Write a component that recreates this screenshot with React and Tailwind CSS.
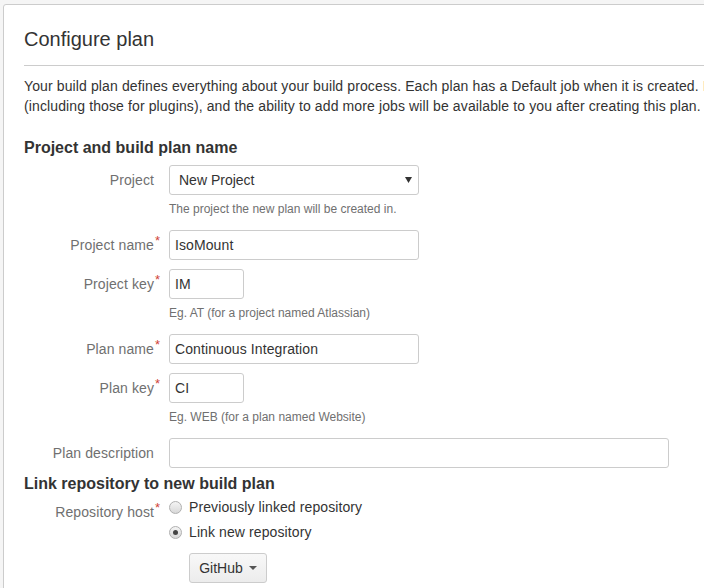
import React from "react";

const Required = () => (
  <span className="absolute left-full top-[-3px] pl-[1px] text-[13px] leading-none text-[#d04437]">*</span>
);

// A single labelled row of the form
const Field = ({ label, required, children, help }) => (
  <div className="flex mb-[9px]">
    <div className="w-[145px] shrink-0 pr-[15px] pt-[5px] text-right leading-5 text-[#707070] tracking-[0.1px]">
      <span className="relative">
        {label}
        {required && <Required />}
      </span>
    </div>
    <div className="flex flex-col">
      {children}
      {help && <div className="mt-1 mb-[2px] text-xs leading-5 text-[#707070]">{help}</div>}
    </div>
  </div>
);

const TextInput = ({ value, width }) => (
  <input
    readOnly
    value={value}
    className={`${width} h-[30px] rounded-[3px] border border-[#ccc] bg-white px-[5px] text-sm text-[#333] tracking-[0.1px] outline-none`}
  />
);

const Radio = ({ checked, label }) => (
  <label className="flex items-center h-5 leading-5">
    <span className="flex h-[13px] w-[13px] items-center justify-center rounded-full border border-[#b0b0b0] bg-gradient-to-b from-[#f4f4f4] to-[#d8d8d8]">
      {checked && <span className="h-[5px] w-[5px] rounded-full bg-[#444]" />}
    </span>
    <span className="ml-[7px] text-[#333] tracking-[0.1px]">{label}</span>
  </label>
);

const App = () => {
  return (
    <div className="h-screen overflow-hidden bg-[#f5f5f5] pl-[3px] pt-[4px] font-['Liberation_Sans',Arial,sans-serif] text-sm text-[#333]">
      <div className="w-[780px] h-[700px] rounded-tl-[3px] border border-[#ccc] bg-white px-5 pt-5">
        {/* Header */}
        <div className="border-b border-[#ccc] pb-3">
          <h1 className="text-[20px] leading-7 font-normal text-[#333]">Configure plan</h1>
        </div>

        <div className="mt-[10px] leading-5 whitespace-nowrap tracking-[0.12px]">
          <div>Your build plan defines everything about your build process. Each plan has a Default job when it is created. Its configuration options</div>
          <div>(including those for plugins), and the ability to add more jobs will be available to you after creating this plan.</div>
        </div>

        {/* Project section */}
        <h2 className="mt-[22px] mb-[7px] text-base font-bold leading-5 text-[#333]">Project and build plan name</h2>

        <Field label="Project" help="The project the new plan will be created in.">
          <div className="flex h-[30px] w-[250px] items-center justify-between rounded-[3px] border border-[#ccc] bg-white pl-[9px] pr-[6px]">
            <span>New Project</span>
            <svg width="7" height="6" viewBox="0 0 7 6">
              <path d="M0 0 L7 0 L3.5 6 Z" fill="#333" />
            </svg>
          </div>
        </Field>

        <Field label="Project name" required>
          <TextInput value="IsoMount" width="w-[250px]" />
        </Field>

        <Field label="Project key" required help="Eg. AT (for a project named Atlassian)">
          <TextInput value="IM" width="w-[75px]" />
        </Field>

        <Field label="Plan name" required>
          <TextInput value="Continuous Integration" width="w-[250px]" />
        </Field>

        <Field label="Plan key" required help="Eg. WEB (for a plan named Website)">
          <TextInput value="CI" width="w-[75px]" />
        </Field>

        <Field label="Plan description">
          <TextInput value="" width="w-[500px]" />
        </Field>

        {/* Repository section */}
        <h2 className="mt-[-3px] text-base font-bold leading-5 text-[#333]">Link repository to new build plan</h2>

        <div className="mt-[3px] flex">
          <div className="w-[145px] shrink-0 pr-[15px] pt-[5px] text-right leading-5 text-[#707070] tracking-[0.1px]">
            <span className="relative">
              Repository host
              <Required />
            </span>
          </div>
          <div className="flex flex-col">
            <Radio label="Previously linked repository" />
            <div className="mt-[5px]">
              <Radio checked label="Link new repository" />
            </div>
            <button className="ml-5 mt-[11px] flex h-[30px] w-[78px] items-center justify-center gap-[6px] rounded-[3px] border border-[#ccc] bg-gradient-to-b from-[#f8f8f8] to-[#ececec] text-sm text-[#333]">
              GitHub
              <svg width="8" height="4" viewBox="0 0 8 4">
                <path d="M0 0 L8 0 L4 4 Z" fill="#555" />
              </svg>
            </button>
          </div>
        </div>
      </div>
    </div>
  );
};

export default App;
